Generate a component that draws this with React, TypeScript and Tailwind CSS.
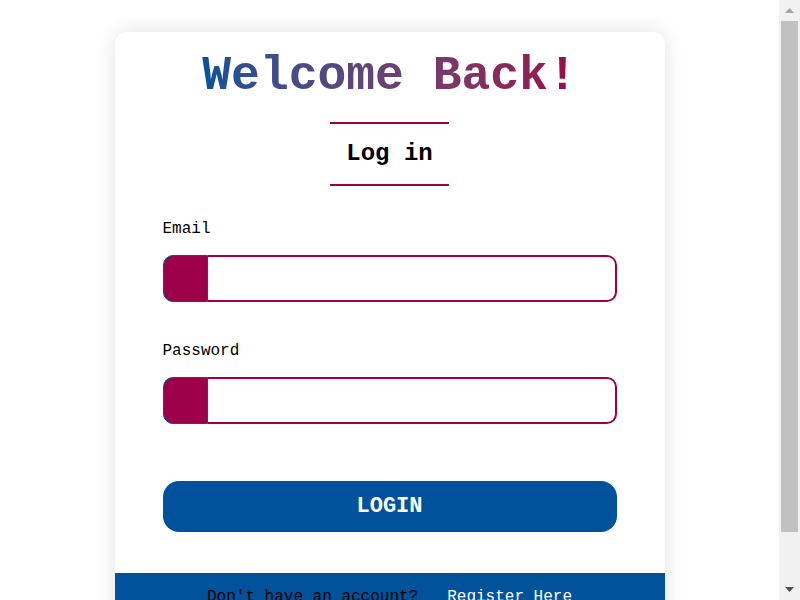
export default function App() {
  const fields = [
    { label: "Email", type: "email", gap: "mt-[34px]" },
    { label: "Password", type: "password", gap: "mt-[40px]" },
  ];

  return (
    <div className="flex h-screen bg-white font-['Liberation_Mono','Courier_New',monospace] text-black">
      <div className="flex-1 overflow-y-auto [scrollbar-width:none]">
        <div className="pt-8 pb-8">
          <div className="mx-auto w-[550px] overflow-hidden rounded-xl bg-white shadow-[0_0_20px_rgba(0,0,0,0.12)]">
            <div className="px-12 pt-[17px]">
              {/* Heading */}
              <h1 className="mx-auto w-fit bg-gradient-to-r from-[#00529b] to-[#9b0049] bg-clip-text text-[48px] leading-[54px] font-bold text-transparent">
                Welcome Back!
              </h1>
              <div className="mx-auto mt-[19px] w-fit border-y-2 border-[#9b0049] px-4 py-4 text-2xl leading-[28px] font-bold">
                Log in
              </div>

              {/* Fields */}
              {fields.map((f) => (
                <div key={f.label} className={f.gap}>
                  <label className="block text-base leading-[18px]">{f.label}</label>
                  <div className="mt-[17px] flex h-[47px]">
                    <span className="w-[45px] rounded-l-[10px] border border-[#00529b] bg-[#9b0049]" />
                    <input
                      type={f.type}
                      className="min-w-0 flex-1 rounded-r-[10px] border-2 border-l-0 border-[#9b0049] bg-white px-3 outline-none"
                    />
                  </div>
                </div>
              ))}

              <button className="mt-[57px] flex h-[51px] w-full items-center justify-center rounded-2xl bg-[#00529b] text-[22px] font-bold text-white">
                LOGIN
              </button>
            </div>

            {/* Footer */}
            <div className="mt-[41px] bg-[#00529b] pt-[15px] pb-[27px] text-center text-base leading-[18px]">
              <span className="text-black">Don't have an account?</span>
              <a className="ml-[29px] text-white">Register Here</a>
            </div>
          </div>
        </div>
      </div>

      {/* Scrollbar */}
      <div className="flex w-[21px] flex-col items-center bg-[#f1f1f1]">
        <div className="flex h-[21px] items-center justify-center">
          <svg width="9" height="5" viewBox="0 0 9 5">
            <path d="M4.5 0L9 5H0z" fill="#a3a3a3" />
          </svg>
        </div>
        <div className="h-[511px] w-[17px] bg-[#c1c1c1]" />
        <div className="flex-1" />
        <div className="flex h-[21px] items-center justify-center">
          <svg width="9" height="5" viewBox="0 0 9 5">
            <path d="M0 0H9L4.5 5z" fill="#505050" />
          </svg>
        </div>
      </div>
    </div>
  );
}
